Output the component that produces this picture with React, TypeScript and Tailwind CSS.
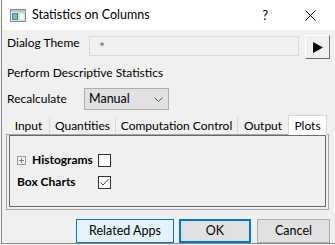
import React from "react";

const font = { fontFamily: 'Lato, "Noto Sans", sans-serif' };

function TitleIcon() {
  return (
    <svg width="16" height="13" viewBox="0 0 16 13">
      <rect x="0.5" y="0.5" width="15" height="12" fill="#e8e8e8" stroke="#8c8c8c" />
      <rect x="1" y="1" width="14" height="2" fill="#b9c3cc" />
      <rect x="2" y="4" width="6" height="7" fill="#3b8f9a" />
      <rect x="3" y="5" width="4" height="5" fill="#6fc0b8" />
      <rect x="9" y="4" width="5" height="7" fill="#ffffff" stroke="#a8b4bf" strokeWidth="0.5" />
    </svg>
  );
}

function Check() {
  return (
    <svg width="13" height="13" viewBox="0 0 13 13">
      <rect x="0.5" y="0.5" width="12" height="12" fill="#ffffff" stroke="#333333" />
      <polyline points="2.5,6.5 5,9 10.5,3" fill="none" stroke="#444444" strokeWidth="1" />
    </svg>
  );
}

const tabs = [
  { label: "Input", w: "w-[41px]" },
  { label: "Quantities", w: "w-[66px]" },
  { label: "Computation Control", w: "w-[122px]" },
  { label: "Output", w: "w-[51px]" },
];

export default function App() {
  return (
    <div className="w-[335px] h-[245px] overflow-hidden bg-[#f7f7f7] text-[12px] text-black" style={font}>
      <div className="ml-[1px] h-[244px] border-l border-b border-[#888888] bg-[#f0f0f0] flex flex-col">
        {/* title bar */}
        <div className="h-[30px] bg-white flex items-center pl-[8px]">
          <TitleIcon />
          <span className="ml-[6px] text-[12.5px] leading-[16px]">Statistics on Columns</span>
          <span className="ml-auto text-[13px] leading-[16px] mr-[37px]">?</span>
          <svg width="11" height="11" viewBox="0 0 11 11" className="mr-[19px]">
            <path d="M0.5 0.5 L10.5 10.5 M10.5 0.5 L0.5 10.5" stroke="#000" strokeWidth="1" />
          </svg>
        </div>

        <div className="pl-[4px] flex flex-col">
          {/* dialog theme */}
          <div className="mt-[5px] h-[25px] flex items-start">
            <span className="w-[83px] leading-[16px] pl-[1px]">Dialog Theme</span>
            <div className="mt-[1px] w-[210px] h-[20px] border border-[#d9d9d9] bg-[#f0f0f0] pl-[9px] text-[14px] text-[#6d6d6d] leading-[20px]">*</div>
            <button className="ml-[6px] w-[25px] h-[24px] border border-t-white border-l-white border-r-[#696969] border-b-[#696969] bg-[#f0f0f0] flex items-center justify-center">
              <svg width="10" height="11" viewBox="0 0 10 11">
                <path d="M0 0 L10 5.5 L0 11 Z" fill="#000" />
              </svg>
            </button>
          </div>

          <div className="mt-[5px] h-[16px] leading-[16px] pl-[1px]">Perform Descriptive Statistics</div>

          {/* recalculate */}
          <div className="mt-[7px] h-[22px] flex items-center">
            <span className="w-[78px] leading-[16px] pl-[1px]">Recalculate</span>
            <div className="w-[85px] h-[22px] border border-[#adadad] bg-[#e1e1e1] flex items-center pl-[4px] pr-[5px]">
              <span className="text-[12.5px] leading-[16px]">Manual</span>
              <svg width="9" height="5" viewBox="0 0 9 5" className="ml-auto">
                <polyline points="0.5,0.5 4.5,4.5 8.5,0.5" fill="none" stroke="#555" strokeWidth="1" />
              </svg>
            </div>
          </div>

          {/* tab strip */}
          <div className="mt-[5px] ml-[2px] h-[19px] flex items-end relative z-10">
            {tabs.map((t, i) => (
              <div
                key={t.label}
                className={`${t.w} h-[17px] flex items-center justify-center leading-[16px] ${i > 0 ? "border-l border-[#d9d9d9]" : ""}`}
              >
                {t.label}
              </div>
            ))}
            <div className="w-[39px] h-[20px] -mb-[1px] bg-white border border-b-0 border-[#d9d9d9] flex items-center justify-center leading-[16px]">
              Plots
            </div>
          </div>

          {/* tab page */}
          <div className="w-[323px] border-x border-b border-t border-[#a3a7b4] px-[2px] pb-[2px]">
            <div className="h-[72px] border border-[#696969] pl-[7px] pt-[14px] flex flex-col">
              <div className="h-[20px] flex items-center">
                <div className="w-[81px] flex items-center">
                  <svg width="9" height="9" viewBox="0 0 9 9">
                    <rect x="0.5" y="0.5" width="8" height="8" fill="#f5f5f5" stroke="#9a9a9a" />
                    <path d="M2 4.5 H7 M4.5 2 V7" stroke="#808080" strokeWidth="1" />
                  </svg>
                  <span className="ml-[6px] font-bold leading-[16px]">Histograms</span>
                </div>
                <div className="w-[13px] h-[13px] border border-[#333333] bg-white" />
              </div>
              <div className="mt-[2px] h-[20px] flex items-center">
                <span className="w-[81px] font-bold leading-[16px]">Box Charts</span>
                <Check />
              </div>
            </div>
          </div>

          {/* buttons */}
          <div className="mt-[9px] flex">
            <button className="ml-[70px] w-[98px] h-[24px] border border-[#0078d7] bg-[#e5f1fb] text-[12.5px] leading-[16px]">Related Apps</button>
            <button className="ml-[5px] w-[72px] h-[24px] border-2 border-[#0078d7] bg-[#e1e1e1] text-[12.5px] leading-[16px]">OK</button>
            <button className="ml-[6px] w-[73px] h-[24px] border border-[#adadad] bg-[#e1e1e1] text-[12.5px] leading-[16px]">Cancel</button>
          </div>
        </div>
      </div>
    </div>
  );
}
